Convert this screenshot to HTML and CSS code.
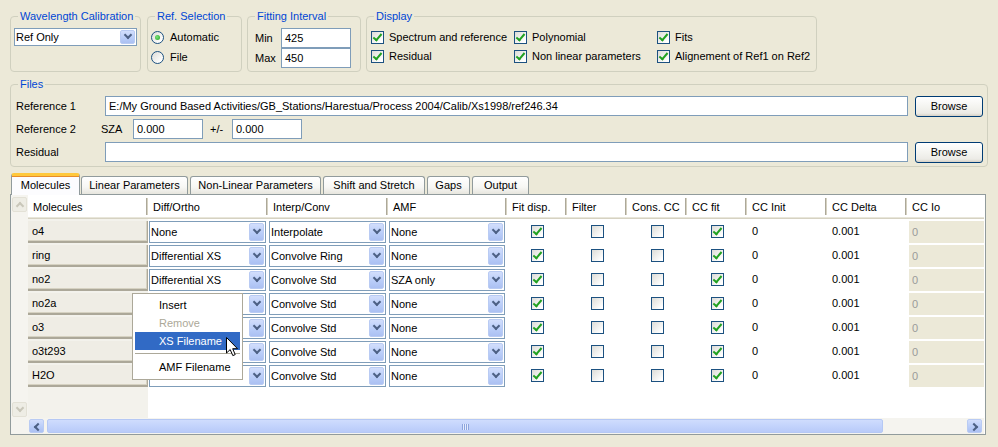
FILE: index.html
```html
<!DOCTYPE html>
<html>
<head>
<meta charset="utf-8">
<title>Analysis Window Properties</title>
<link rel="stylesheet" href="styles.css">
</head>
<body>
<div class="app">
  <div class="top-row">
    <fieldset class="grp g-wl">
      <legend>Wavelength Calibration</legend>
      <div class="gbody b-wl">
        <div class="combo"><span class="ctext">Ref Only</span><i class="arr"></i></div>
      </div>
    </fieldset>
    <fieldset class="grp g-ref">
      <legend>Ref. Selection</legend>
      <div class="gbody b-ref">
        <div class="radio on"><i class="rdot"></i><span>Automatic</span></div>
        <div class="radio"><i class="rdot"></i><span>File</span></div>
      </div>
    </fieldset>
    <fieldset class="grp g-fit">
      <legend>Fitting Interval</legend>
      <div class="gbody b-fit">
        <div class="frow"><span class="flabel">Min</span><div class="input w70">425</div></div>
        <div class="frow"><span class="flabel">Max</span><div class="input w70">450</div></div>
      </div>
    </fieldset>
    <fieldset class="grp g-disp">
      <legend>Display</legend>
      <div class="gbody b-disp">
        <div class="chk"><i class="cb on"></i><span>Spectrum and reference</span></div>
        <div class="chk"><i class="cb on"></i><span>Polynomial</span></div>
        <div class="chk"><i class="cb on"></i><span>Fits</span></div>
        <div class="chk"><i class="cb on"></i><span>Residual</span></div>
        <div class="chk"><i class="cb on"></i><span>Non linear parameters</span></div>
        <div class="chk"><i class="cb on"></i><span>Alignement of Ref1 on Ref2</span></div>
      </div>
    </fieldset>
  </div>

  <fieldset class="grp files">
    <legend>Files</legend>
    <div class="gbody b-files">
      <span class="rlabel">Reference 1</span>
      <div class="input wide">E:/My Ground Based Activities/GB_Stations/Harestua/Process 2004/Calib/Xs1998/ref246.34</div>
      <div class="bcell"><div class="btn">Browse</div></div>

      <span class="rlabel">Reference 2</span>
      <div class="sza">
        <span class="szalabel">SZA</span>
        <div class="input w70">0.000</div>
        <span class="pm">+/-</span>
        <div class="input w70">0.000</div>
      </div>
      <div class="bcell"></div>

      <span class="rlabel">Residual</span>
      <div class="input wide"></div>
      <div class="bcell"><div class="btn">Browse</div></div>
    </div>
  </fieldset>

  <div class="tabs">
    <div class="tab sel t1">Molecules</div>
    <div class="tab t2">Linear Parameters</div>
    <div class="tab t3">Non-Linear Parameters</div>
    <div class="tab t4">Shift and Stretch</div>
    <div class="tab t5">Gaps</div>
    <div class="tab t6">Output</div>
  </div>

  <div class="pane">
    <div class="vscroll">
      <i class="sarr dis up"></i>
      <i class="sarr dis down"></i>
    </div>
    <div class="grid">
      <div class="th">Molecules</div>
      <div class="th">Diff/Ortho</div>
      <div class="th">Interp/Conv</div>
      <div class="th">AMF</div>
      <div class="th">Fit disp.</div>
      <div class="th">Filter</div>
      <div class="th">Cons. CC</div>
      <div class="th">CC fit</div>
      <div class="th">CC Init</div>
      <div class="th">CC Delta</div>
      <div class="th last">CC Io</div>

      <div class="name">o4</div>
      <div class="cc"><div class="cbx"><span class="ctext">None</span><i class="arr"></i></div></div>
      <div class="cc"><div class="cbx"><span class="ctext">Interpolate</span><i class="arr"></i></div></div>
      <div class="cc"><div class="cbx"><span class="ctext">None</span><i class="arr"></i></div></div>
      <div class="ck"><i class="cb on"></i></div>
      <div class="ck"><i class="cb"></i></div>
      <div class="ck"><i class="cb"></i></div>
      <div class="ck"><i class="cb on"></i></div>
      <div class="tx">0</div>
      <div class="tx">0.001</div>
      <div class="ro">0</div>

      <div class="name">ring</div>
      <div class="cc"><div class="cbx"><span class="ctext">Differential XS</span><i class="arr"></i></div></div>
      <div class="cc"><div class="cbx"><span class="ctext">Convolve Ring</span><i class="arr"></i></div></div>
      <div class="cc"><div class="cbx"><span class="ctext">None</span><i class="arr"></i></div></div>
      <div class="ck"><i class="cb on"></i></div>
      <div class="ck"><i class="cb"></i></div>
      <div class="ck"><i class="cb"></i></div>
      <div class="ck"><i class="cb on"></i></div>
      <div class="tx">0</div>
      <div class="tx">0.001</div>
      <div class="ro">0</div>

      <div class="name">no2</div>
      <div class="cc"><div class="cbx"><span class="ctext">Differential XS</span><i class="arr"></i></div></div>
      <div class="cc"><div class="cbx"><span class="ctext">Convolve Std</span><i class="arr"></i></div></div>
      <div class="cc"><div class="cbx"><span class="ctext">SZA only</span><i class="arr"></i></div></div>
      <div class="ck"><i class="cb on"></i></div>
      <div class="ck"><i class="cb"></i></div>
      <div class="ck"><i class="cb"></i></div>
      <div class="ck"><i class="cb on"></i></div>
      <div class="tx">0</div>
      <div class="tx">0.001</div>
      <div class="ro">0</div>

      <div class="name">no2a</div>
      <div class="cc"><div class="cbx"><span class="ctext"></span><i class="arr"></i></div></div>
      <div class="cc"><div class="cbx"><span class="ctext">Convolve Std</span><i class="arr"></i></div></div>
      <div class="cc"><div class="cbx"><span class="ctext">None</span><i class="arr"></i></div></div>
      <div class="ck"><i class="cb on"></i></div>
      <div class="ck"><i class="cb"></i></div>
      <div class="ck"><i class="cb"></i></div>
      <div class="ck"><i class="cb on"></i></div>
      <div class="tx">0</div>
      <div class="tx">0.001</div>
      <div class="ro">0</div>

      <div class="name">o3</div>
      <div class="cc"><div class="cbx"><span class="ctext"></span><i class="arr"></i></div></div>
      <div class="cc"><div class="cbx"><span class="ctext">Convolve Std</span><i class="arr"></i></div></div>
      <div class="cc"><div class="cbx"><span class="ctext">None</span><i class="arr"></i></div></div>
      <div class="ck"><i class="cb on"></i></div>
      <div class="ck"><i class="cb"></i></div>
      <div class="ck"><i class="cb"></i></div>
      <div class="ck"><i class="cb on"></i></div>
      <div class="tx">0</div>
      <div class="tx">0.001</div>
      <div class="ro">0</div>

      <div class="name">o3t293</div>
      <div class="cc"><div class="cbx"><span class="ctext"></span><i class="arr"></i></div></div>
      <div class="cc"><div class="cbx"><span class="ctext">Convolve Std</span><i class="arr"></i></div></div>
      <div class="cc"><div class="cbx"><span class="ctext">None</span><i class="arr"></i></div></div>
      <div class="ck"><i class="cb on"></i></div>
      <div class="ck"><i class="cb"></i></div>
      <div class="ck"><i class="cb"></i></div>
      <div class="ck"><i class="cb on"></i></div>
      <div class="tx">0</div>
      <div class="tx">0.001</div>
      <div class="ro">0</div>

      <div class="name">H2O</div>
      <div class="cc"><div class="cbx"><span class="ctext"></span><i class="arr"></i></div></div>
      <div class="cc"><div class="cbx"><span class="ctext">Convolve Std</span><i class="arr"></i></div></div>
      <div class="cc"><div class="cbx"><span class="ctext">None</span><i class="arr"></i></div></div>
      <div class="ck"><i class="cb on"></i></div>
      <div class="ck"><i class="cb"></i></div>
      <div class="ck"><i class="cb"></i></div>
      <div class="ck"><i class="cb on"></i></div>
      <div class="tx">0</div>
      <div class="tx">0.001</div>
      <div class="ro">0</div>
    </div>
    <div class="corner"></div>
    <div class="hscroll">
      <i class="sarr left"></i>
      <div class="thumb"><i class="grip"></i></div>
      <i class="sarr right"></i>
    </div>
  </div>

  <div class="menu">
    <div class="mi">Insert</div>
    <div class="mi dis">Remove</div>
    <div class="mi hi">XS Filename</div>
    <div class="msep"></div>
    <div class="mi">AMF Filename</div>
  </div>

  <svg class="cursor" width="13" height="20" viewBox="0 0 13 20">
    <path d="M0.5 0.5 L0.5 16 L4.2 12.6 L6.8 18.6 L9.2 17.6 L6.7 11.7 L11.5 11.7 Z" fill="#fff" stroke="#000" stroke-width="1" stroke-linejoin="miter"/>
  </svg>
</div>
</body>
</html>
```

FILE: styles.css
```css
* { box-sizing: border-box; }
html, body { margin: 0; padding: 0; }
body {
  width: 998px;
  height: 447px;
  overflow: hidden;
  background: #ECE9D8;
  font: 11px/13px "Liberation Sans", Arial, sans-serif;
  color: #000;
}
.app { position: relative; width: 998px; height: 447px; padding: 10px 0 0 10px; }

/* group boxes */
.grp { margin: 0; padding: 0; border: 1px solid #D0D0BF; border-radius: 4px; min-width: 0; }
.grp > legend { color: #0046D5; padding: 0 2px; margin-left: 7px; line-height: 13px; }

.top-row { display: flex; height: 62px; }
.g-wl { width: 131px; margin-right: 6px; }
.g-ref { width: 95px; margin-right: 5px; }
.g-fit { width: 114px; margin-right: 5px; }
.g-disp { width: 451px; }

.gbody { padding-top: 5px; }
.b-wl { padding-left: 3px; padding-right: 3px; }
.b-ref { padding-left: 3px; display: flex; flex-direction: column; gap: 1px; }
.b-fit { padding-left: 7px; }
.b-disp { padding-left: 4px; display: grid; grid-template-columns: 143px 143px auto; grid-auto-rows: 19px; }

/* combo */
.combo { display: flex; height: 18px; border: 1px solid #7F9DB9; background: #fff; align-items: center; }
.ctext { flex: 1; padding-left: 1px; white-space: nowrap; overflow: hidden; }
.arr {
  position: relative; width: 15px; align-self: stretch; margin: 1px;
  border: 1px solid #B9CBF3; border-radius: 2px;
  background: linear-gradient(#D2DEFC, #B8CCF8 60%, #ABC0F2);
}
.arr::after {
  content: ""; position: absolute; left: 4px; top: 50%; margin-top: -5px;
  width: 4px; height: 4px; border: solid #4D6185; border-width: 0 2px 2px 0;
  transform: rotate(45deg);
}

/* radio */
.radio { display: flex; align-items: center; height: 19px; gap: 6px; }
.rdot {
  position: relative; width: 13px; height: 13px; border-radius: 50%;
  border: 1px solid #1C5180;
  background: linear-gradient(135deg, #DCDCD7, #FFFFFF 85%);
}
.radio.on .rdot::after {
  content: ""; position: absolute; left: 3px; top: 3px; width: 5px; height: 5px; border-radius: 50%;
  background: radial-gradient(circle at 40% 40%, #7BE37B, #21A121);
}

/* inputs */
.frow { display: flex; align-items: center; height: 20px; }
.flabel { width: 26px; }
.input {
  height: 20px; border: 1px solid #7F9DB9; background: #fff;
  padding-left: 3px; display: flex; align-items: center; white-space: nowrap; overflow: hidden;
}
.w70 { width: 70px; }

/* checkbox */
.chk { display: flex; align-items: center; gap: 5px; }
.cb {
  position: relative; display: block; width: 13px; height: 13px;
  border: 1px solid #1C5180;
  background: linear-gradient(135deg, #DCDCD7, #FFFFFF 85%);
}
.cb.on::after {
  content: ""; position: absolute; left: 3px; top: 0px; width: 3px; height: 7px;
  border: solid #21A121; border-width: 0 2px 2px 0; transform: rotate(40deg);
}

/* files */
.files { width: 978px; height: 89px; margin-top: 6px; }
.b-files {
  display: grid; grid-template-columns: 85px 807px 75px; grid-template-rows: 21px 21px 21px;
  row-gap: 2px; padding-left: 5px; padding-right: 4px;
}
.rlabel { display: flex; align-items: center; }
.wide { margin-left: 4px; }
.bcell { padding-left: 7px; }
.btn {
  width: 68px; height: 21px; border: 1px solid #003C74; border-radius: 3px;
  background: linear-gradient(#FFFFFF, #F4F4F0 50%, #ECEBE6 85%, #D6D0C5);
  display: flex; align-items: center; justify-content: center;
}
.sza { display: flex; align-items: flex-start; }
.szalabel { width: 32px; height: 20px; display: flex; align-items: center; }
.pm { width: 29px; height: 20px; padding-left: 7px; display: flex; align-items: center; }

/* tabs */
.tabs { display: flex; align-items: flex-end; height: 21px; margin-top: 6px; padding-left: 1px; gap: 2px; position: relative; z-index: 2; }
.tab {
  height: 18px; border: 1px solid #919B9C; border-bottom: none; border-radius: 3px 3px 0 0;
  background: linear-gradient(#FFFFFF, #F7F7F4 60%, #E7E6DE);
  display: flex; align-items: center; justify-content: center; white-space: nowrap;
}
.tab.sel {
  height: 22px; margin-bottom: -1px; margin-right: -1px; background: #FCFCFE;
  border-top: 3px solid #FFC83C; box-shadow: inset 0 1px 0 #E68B2C;
  padding-top: 0;
}
.t1 { width: 69px; }
.t2 { width: 107px; }
.t3 { width: 131px; }
.t4 { width: 102px; }
.t5 { width: 43px; }
.t6 { width: 57px; }

/* pane / table */
.pane {
  width: 976px; height: 241px; border: 1px solid #919B9C; background: #fff;
  display: grid; grid-template-columns: 17px 956px; grid-template-rows: 223px 16px;
}
.vscroll {
  background: #F5F4EF; display: flex; flex-direction: column; justify-content: space-between;
  padding: 2px 1px 1px 1px;
}
.corner { background: #F5F4EF; }
.grid {
  display: grid;
  grid-template-columns: 120px 120px 120px 119px 60px 60px 60px 60px 80px 80px 77px;
  grid-template-rows: 24px;
  grid-auto-rows: 24px;
  background: linear-gradient(to right, #F3F2EC 120px, #FFFFFF 120px);
}
.th {
  position: relative; background: #FFFFFF; padding-left: 5px; display: flex; align-items: center;
  box-shadow: inset 0 -1px #D6D2C2, inset 0 -2px #E8E6DA;
  white-space: nowrap;
}
.th::after {
  content: ""; position: absolute; right: 0; top: 3px; bottom: 4px; width: 2px;
  background: linear-gradient(to right, #ACA899 50%, #D6D2C2 50%);
}
.th.last::after { display: none; }
.name {
  margin-top: 2px; background: #EFEDE5; padding-left: 4px; display: flex; align-items: center;
  border-right: 1px solid #ACA899; border-bottom: 2px solid #ACA899;
  box-shadow: inset -1px -1px #D6D2C2;
}
.cc { padding: 2px 2px 0 1px; }
.cbx { display: flex; height: 22px; border: 1px solid #7F9DB9; background: #fff; align-items: center; }
.cbx .ctext { padding-left: 1px; }
.ck { display: flex; align-items: center; justify-content: center; padding-top: 1px; }
.tx { padding-left: 5px; display: flex; align-items: center; padding-top: 1px; }
.ro { margin: 2px 0 0 2px; background: #ECE9D8; color: #9A9A9A; padding-left: 3px; display: flex; align-items: center; }

/* scrollbars */
.sarr {
  position: relative; display: block; width: 15px; height: 15px; border-radius: 2px;
  border: 1px solid #B9CBF3;
  background: linear-gradient(#D2DEFC, #B8CCF8 60%, #ABC0F2);
}
.sarr::after {
  content: ""; position: absolute; width: 4px; height: 4px; border: solid #4D6185; border-width: 0 2px 2px 0;
}
.sarr.dis { background: #EEEDE5; border-color: #E3E1D6; }
.sarr.dis::after { border-color: #C9C7BA; }
.sarr.up::after { left: 4px; top: 5px; transform: rotate(-135deg); }
.sarr.down::after { left: 4px; top: 2px; transform: rotate(45deg); }
.sarr.left::after { left: 5px; top: 4px; transform: rotate(135deg); }
.sarr.right::after { left: 3px; top: 4px; transform: rotate(-45deg); }
.hscroll {
  background: #F5F4EF; display: flex; align-items: center; padding: 0 2px 0 1px;
}
.hscroll .sarr { height: 14px; }
.thumb {
  position: relative; width: 836px; height: 14px; margin-left: 3px; margin-right: auto;
  border: 1px solid #B5C8F4; border-radius: 2px;
  background: linear-gradient(#CFDCFD, #C3D3FC 50%, #B9CBF8);
}
.grip {
  position: absolute; left: 50%; top: 4px; width: 7px; height: 6px; margin-left: -3px;
  background: repeating-linear-gradient(to right, #8DA5DD 0 1px, #E4ECFE 1px 2px);
}

/* context menu */
.menu {
  position: absolute; left: 132px; top: 293px; width: 111px; height: 87px;
  background: #FFFFFF; border: 1px solid #ACA899; padding: 2px; z-index: 5;
}
.mi { height: 18px; padding-left: 24px; display: flex; align-items: center; white-space: nowrap; }
.mi.dis { color: #ACA899; }
.mi.hi { background: #316AC5; color: #FFFFFF; }
.msep { height: 8px; position: relative; }
.msep::after { content: ""; position: absolute; left: 0; right: 0; top: 3px; height: 1px; background: #ACA899; }

.cursor { position: absolute; left: 226px; top: 337px; z-index: 6; }
```
